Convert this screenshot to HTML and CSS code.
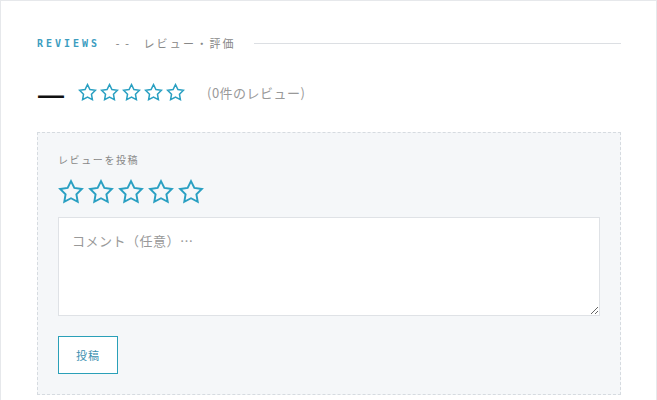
FILE: index.html
```html
<!DOCTYPE html>
<html lang="ja">
<head>
    <meta charset="UTF-8">
    <title>Reviews</title>
    <link rel="stylesheet" href="styles.css">
</head>
<body>
    <section class="reviews">
        <div class="heading">
            <span class="heading-en">REVIEWS</span>
            <span class="heading-dash">--</span>
            <span class="heading-ja">レビュー・評価</span>
            <span class="heading-line"></span>
        </div>

        <div class="summary">
            <span class="average">—</span>
            <span class="stars stars-small">
                <svg viewBox="0 0 24 24"><polygon points="12 2 15.09 8.26 22 9.27 17 14.14 18.18 21.02 12 17.77 5.82 21.02 7 14.14 2 9.27 8.91 8.26"/></svg>
                <svg viewBox="0 0 24 24"><polygon points="12 2 15.09 8.26 22 9.27 17 14.14 18.18 21.02 12 17.77 5.82 21.02 7 14.14 2 9.27 8.91 8.26"/></svg>
                <svg viewBox="0 0 24 24"><polygon points="12 2 15.09 8.26 22 9.27 17 14.14 18.18 21.02 12 17.77 5.82 21.02 7 14.14 2 9.27 8.91 8.26"/></svg>
                <svg viewBox="0 0 24 24"><polygon points="12 2 15.09 8.26 22 9.27 17 14.14 18.18 21.02 12 17.77 5.82 21.02 7 14.14 2 9.27 8.91 8.26"/></svg>
                <svg viewBox="0 0 24 24"><polygon points="12 2 15.09 8.26 22 9.27 17 14.14 18.18 21.02 12 17.77 5.82 21.02 7 14.14 2 9.27 8.91 8.26"/></svg>
            </span>
            <span class="count">(0件のレビュー)</span>
        </div>

        <form class="review-form">
            <p class="form-title">レビューを投稿</p>
            <div class="stars stars-large">
                <svg viewBox="0 0 24 24"><polygon points="12 2 15.09 8.26 22 9.27 17 14.14 18.18 21.02 12 17.77 5.82 21.02 7 14.14 2 9.27 8.91 8.26"/></svg>
                <svg viewBox="0 0 24 24"><polygon points="12 2 15.09 8.26 22 9.27 17 14.14 18.18 21.02 12 17.77 5.82 21.02 7 14.14 2 9.27 8.91 8.26"/></svg>
                <svg viewBox="0 0 24 24"><polygon points="12 2 15.09 8.26 22 9.27 17 14.14 18.18 21.02 12 17.77 5.82 21.02 7 14.14 2 9.27 8.91 8.26"/></svg>
                <svg viewBox="0 0 24 24"><polygon points="12 2 15.09 8.26 22 9.27 17 14.14 18.18 21.02 12 17.77 5.82 21.02 7 14.14 2 9.27 8.91 8.26"/></svg>
                <svg viewBox="0 0 24 24"><polygon points="12 2 15.09 8.26 22 9.27 17 14.14 18.18 21.02 12 17.77 5.82 21.02 7 14.14 2 9.27 8.91 8.26"/></svg>
            </div>
            <textarea class="comment" placeholder="コメント（任意）…"></textarea>
            <button type="button" class="submit">投稿</button>
        </form>
    </section>
</body>
</html>
```

FILE: styles.css
```css
body {
    margin: 0;
    background: #fff;
    font-family: "Noto Sans CJK JP", "Noto Sans", sans-serif;
}

.reviews {
    border: 1px solid #e6e8eb;
    padding: 35px 35px 36px 36px;
}

.heading {
    display: flex;
    align-items: center;
    height: 14px;
}
.heading-en {
    font-family: "DejaVu Sans Mono", monospace;
    font-weight: bold;
    font-size: 10px;
    letter-spacing: 3px;
    color: #3c9dbf;
}
.heading-dash {
    font-family: "DejaVu Sans Mono", monospace;
    font-size: 11px;
    letter-spacing: 3px;
    color: #888;
    margin-left: 14px;
}
.heading-ja {
    font-size: 11px;
    letter-spacing: 2.2px;
    color: #888;
    margin-left: 10px;
}
.heading-line {
    flex: 1;
    border-top: 1px solid #dcdfe3;
    margin-left: 18px;
}

.summary {
    display: flex;
    align-items: center;
    margin-top: 27px;
    height: 30px;
}
.average {
    font-family: "Liberation Sans", sans-serif;
    font-weight: bold;
    font-size: 26px;
    line-height: 26px;
    color: #111;
    margin-left: 1px;
    position: relative;
    top: 3px;
}

.stars {
    display: flex;
}
.stars svg {
    fill: none;
    stroke: #2aa0c2;
    stroke-width: 1.9;
    stroke-linejoin: miter;
}
.stars-small {
    gap: 3px;
    margin-left: 14px;
}
.stars-small svg {
    width: 19px;
    height: 19px;
}
.count {
    font-size: 13px;
    color: #999;
    margin-left: 22px;
    letter-spacing: 0.5px;
}

.review-form {
    margin-top: 25px;
    border: 1px dashed #d6dbe0;
    background: #f5f7f9;
    padding: 20px;
}
.form-title {
    margin: 0;
    font-size: 10px;
    line-height: 14px;
    letter-spacing: 1.6px;
    color: #888;
}
.stars-large {
    gap: 4px;
    margin-top: 12px;
}
.stars-large svg {
    width: 26px;
    height: 26px;
    stroke-width: 1.8;
}

.comment {
    display: block;
    box-sizing: border-box;
    width: 100%;
    height: 99px;
    margin-top: 12px;
    border: 1px solid #dfe2e6;
    background: #fff;
    padding: 13px;
    font-family: "Noto Sans CJK JP", sans-serif;
    font-size: 13px;
    color: #444;
}
.comment::placeholder {
    color: #999;
    letter-spacing: 0.5px;
}

.submit {
    display: block;
    margin-top: 20px;
    width: 60px;
    height: 38px;
    border: 1px solid #2aa0b8;
    background: #fff;
    color: #3a8fb0;
    font-family: "Noto Sans CJK JP", sans-serif;
    font-size: 11px;
    letter-spacing: 1px;
    padding: 0;
}
```
